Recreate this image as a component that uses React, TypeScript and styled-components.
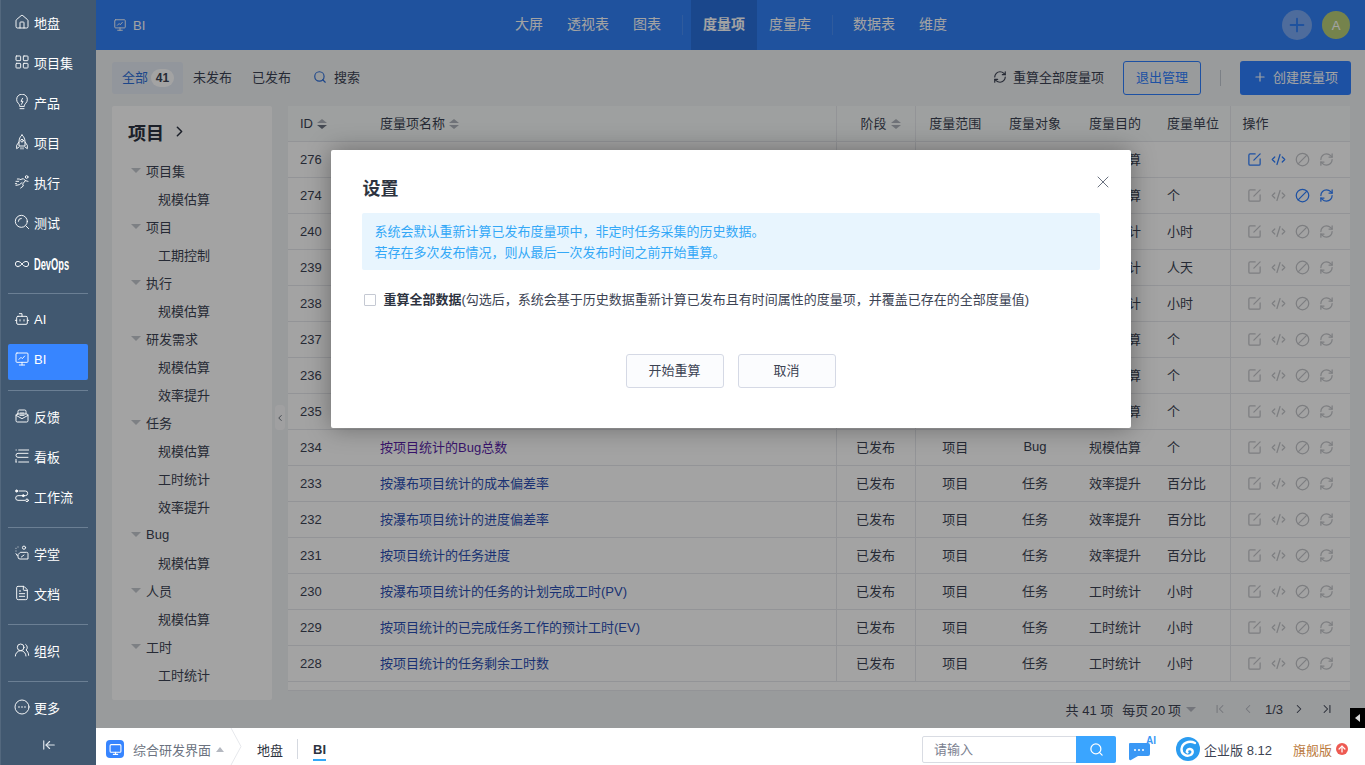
import React from 'react';
import styled, { createGlobalStyle } from 'styled-components';
import {
  House,
  LayoutGrid,
  Infinity as InfinityIcon,
  Bot,
  FileText,
  UsersRound,
  ArrowLeftToLine,
  ChevronRight,
  ChevronLeft,
  ChevronFirst,
  ChevronLast,
  Search,
  RefreshCw,
  Plus,
  X,
  CodeXml,
  Monitor,
  ArrowUp,
} from 'lucide-react';

const GlobalStyle = createGlobalStyle`
  html, body {
    margin: 0;
    padding: 0;
    height: 100%;
    overflow: hidden;
    font-family: "Liberation Sans", "Noto Sans CJK SC", sans-serif;
    font-size: 13px;
    color: #3c4353;
  }
  * { box-sizing: border-box; }
`;

const Shell = styled.div`
  display: flex;
  width: 1365px;
  height: 765px;
`;

const Side = styled.aside`
  width: 96px;
  flex: none;
  display: flex;
  flex-direction: column;
  background: #415870;
  border-left: 1px solid #53687e;
`;

const SideGroup = styled.div<{ $top?: number; $bottom?: number; $last?: boolean }>`
  margin: 0 8px 0 7px;
  padding: ${(p) => p.$top ?? 10}px 0 ${(p) => p.$bottom ?? 10}px;
  display: flex;
  flex-direction: column;
  gap: 4px;
  border-bottom: ${(p) => (p.$last ? 'none' : '1px solid #6b7f94')};
`;

const SideItem = styled.div<{ $active?: boolean; $extra?: number }>`
  height: 36px;
  margin-top: ${(p) => p.$extra ?? 0}px;
  padding: 0 0 6px 6px;
  display: flex;
  align-items: center;
  gap: 4px;
  color: #fff;
  font-size: 13px;
  font-weight: 400;
  border-radius: 2px;
  background: ${(p) => (p.$active ? '#3785ff' : 'transparent')};
  svg {
    width: 16px;
    height: 16px;
    flex: none;
    stroke-width: 1.4;
  }
`;

const DevOpsLabel = styled.span`
  display: inline-block;
  margin-top: 2px;
  font-weight: 700;
  font-size: 16px;
  transform: scaleX(0.58);
  transform-origin: left center;
`;

const Collapse = styled.div`
  margin-top: auto;
  height: 37px;
  padding-bottom: 3px;
  display: flex;
  align-items: center;
  justify-content: center;
  color: #dfe5ec;
  svg {
    width: 14px;
    height: 14px;
  }
`;

const Main = styled.div`
  flex: 1;
  min-width: 0;
  display: flex;
  flex-direction: column;
`;

const Stage = styled.div`
  position: relative;
  height: 728px;
  display: flex;
  flex-direction: column;
  background: #f0f2f5;
`;

const TopBar = styled.header`
  height: 50px;
  flex: none;
  display: flex;
  align-items: stretch;
  background: #3180f7;
  color: #fff;
`;

const TopSide = styled.div<{ $right?: boolean }>`
  flex: 1;
  display: flex;
  align-items: center;
  justify-content: ${(p) => (p.$right ? 'flex-end' : 'flex-start')};
  padding: ${(p) => (p.$right ? '0 15px 0 0' : '0 0 0 17px')};
  gap: ${(p) => (p.$right ? '10px' : '6px')};
  font-size: 13px;
`;

const Nav = styled.nav`
  display: flex;
  align-items: stretch;
  margin-left: -1px;
`;

const NavItem = styled.div<{ $active?: boolean }>`
  padding: 0 12px 4px;
  display: flex;
  align-items: center;
  font-size: 14px;
  font-weight: ${(p) => (p.$active ? 700 : 400)};
  background: ${(p) => (p.$active ? '#2a70dc' : 'transparent')};
`;

const NavDivider = styled.div`
  width: 1px;
  height: 20px;
  align-self: center;
  margin: 0 8px 0 9px;
  background: #4a8ff6;
`;

const AddCircle = styled.div`
  width: 30px;
  height: 30px;
  border-radius: 50%;
  background: #7aa9f5;
  color: #3180f7;
  display: flex;
  align-items: center;
  justify-content: center;
`;

const Avatar = styled.div`
  width: 28px;
  height: 28px;
  border-radius: 50%;
  background: #b8ce78;
  color: #fff;
  font-size: 13px;
  display: flex;
  align-items: center;
  justify-content: center;
`;

const SubBar = styled.div`
  height: 56px;
  flex: none;
  display: flex;
  align-items: center;
  padding: 0 14px 0 16px;
`;

const Tab = styled.div<{ $active?: boolean }>`
  height: 32px;
  padding: 0 ${(p) => (p.$active ? 9 : 10)}px 3px 10px;
  display: flex;
  align-items: center;
  gap: 3px;
  border-radius: 3px;
  color: ${(p) => (p.$active ? '#2e6fd8' : '#3c4353')};
  background: ${(p) => (p.$active ? '#e4ebf5' : 'transparent')};
`;

const Badge = styled.span`
  min-width: 23px;
  height: 18px;
  margin-top: 2px;
  padding: 0 4px;
  border-radius: 9px;
  background: #fff;
  color: #3c4353;
  font-size: 12px;
  font-weight: 700;
  text-align: center;
  line-height: 18px;
`;

const SearchTab = styled.div`
  margin-left: 12px;
  padding-bottom: 3px;
  display: flex;
  align-items: center;
  gap: 7px;
  svg {
    color: #2e6fd8;
    width: 14px;
    height: 14px;
  }
`;

const SubRight = styled.div`
  margin-left: auto;
  display: flex;
  align-items: center;
`;

const Recalc = styled.div`
  display: flex;
  align-items: center;
  gap: 6px;
  margin-right: 19px;
  padding-bottom: 3px;
  svg {
    width: 14px;
    height: 14px;
  }
`;

const OutlineButton = styled.div`
  width: 78px;
  height: 34px;
  padding-bottom: 3px;
  border: 1px solid #2e7fff;
  border-radius: 3px;
  color: #2e7fff;
  display: flex;
  align-items: center;
  justify-content: center;
`;

const SubDivider = styled.div`
  width: 1px;
  height: 16px;
  margin: 0 19px;
  background: #c3c8d0;
`;

const PrimaryButton = styled.div`
  width: 111px;
  height: 34px;
  padding-bottom: 3px;
  border-radius: 3px;
  background: #2e7fff;
  color: #fff;
  display: flex;
  align-items: center;
  justify-content: center;
  gap: 6px;
  svg {
    width: 14px;
    height: 14px;
  }
`;

const Body = styled.div`
  flex: 1;
  min-height: 0;
  display: flex;
  padding: 0 15px 0 16px;
  gap: 16px;
  position: relative;
`;

const TreePanel = styled.div`
  width: 160px;
  height: 594px;
  flex: none;
  background: #fff;
  border-radius: 2px;
`;

const TreeTitle = styled.div`
  height: 51px;
  padding: 0 0 0 16px;
  display: flex;
  align-items: center;
  gap: 7px;
  font-size: 18px;
  font-weight: 700;
  color: #2d3340;
  svg {
    width: 17px;
    height: 17px;
    stroke-width: 2.2;
  }
`;

const TreeList = styled.div`
  display: flex;
  flex-direction: column;
`;

const TreeRow = styled.div<{ $child?: boolean }>`
  height: 28px;
  display: flex;
  align-items: center;
  gap: 5px;
  padding: 0 0 2px ${(p) => (p.$child ? 46 : 19)}px;
  color: #3c4353;
`;

const Caret = styled.i`
  width: 0;
  height: 0;
  border-left: 5px solid transparent;
  border-right: 5px solid transparent;
  border-top: 5px solid #c4c8cf;
`;

const Handle = styled.div`
  position: absolute;
  left: 179px;
  top: 299px;
  width: 10px;
  height: 25px;
  border-radius: 4px;
  background: #fbfbfc;
  display: flex;
  align-items: center;
  justify-content: center;
  color: #4b5563;
`;

const TableWrap = styled.div`
  flex: 1;
  min-width: 0;
  display: flex;
  flex-direction: column;
`;

const TableBox = styled.div`
  height: 585px;
  background: #fff;
  border-bottom: 1px solid #e6e8ec;
  overflow: hidden;
`;

const Grid = styled.table`
  width: 100%;
  border-collapse: collapse;
  table-layout: fixed;
`;

const Th = styled.th<{ $center?: boolean; $line?: boolean; $lead?: number }>`
  height: 35px;
  padding: 0 12px 2px ${(p) => p.$lead ?? 12}px;
  font-weight: 400;
  font-size: 13px;
  color: #3c4353;
  background: #f8fbfa;
  text-align: ${(p) => (p.$center ? 'center' : 'left')};
  border-bottom: 1px solid #e6e8ec;
  border-left: ${(p) => (p.$line ? '1px solid #e6e8ec' : 'none')};
  white-space: nowrap;
  &:first-child {
    padding-bottom: 0;
  }
`;

const Td = styled.td<{ $center?: boolean; $line?: boolean; $right?: boolean }>`
  height: 36px;
  padding: 0 ${(p) => (p.$right ? 14 : 12)}px 2px 12px;
  color: #3c4353;
  text-align: ${(p) => (p.$right ? 'right' : p.$center ? 'center' : 'left')};
  border-bottom: 1px solid #e6e8ec;
  border-left: ${(p) => (p.$line ? '1px solid #e6e8ec' : 'none')};
  white-space: nowrap;
  &:first-child {
    padding-bottom: 0;
  }
`;

const NameLink = styled.a<{ $visited?: boolean }>`
  color: ${(p) => (p.$visited ? '#5a1fa8' : '#2b4fb4')};
  text-decoration: none;
`;

const SortMark = styled.span<{ $down?: boolean }>`
  display: inline-flex;
  flex-direction: column;
  gap: 2px;
  margin-left: 4px;
  vertical-align: middle;
  &::before,
  &::after {
    content: '';
    width: 0;
    height: 0;
    border-left: 5px solid transparent;
    border-right: 5px solid transparent;
  }
  &::before {
    border-bottom: 4px solid #aeb3bc;
  }
  &::after {
    border-top: 4px solid ${(p) => (p.$down ? '#6b7280' : '#aeb3bc')};
  }
`;

const Ops = styled.div`
  display: flex;
  align-items: center;
  gap: 8px;
  padding: 2px 0 0 4px;
`;

const OpIcon = styled.span<{ $on?: boolean }>`
  width: 16px;
  height: 16px;
  display: inline-flex;
  align-items: center;
  justify-content: center;
  color: ${(p) => (p.$on ? '#2e7fff' : '#c4c6ca')};
  svg {
    width: 15px;
    height: 15px;
    stroke-width: 2;
  }
`;

const Pager = styled.div`
  flex: 1;
  display: flex;
  align-items: center;
  justify-content: flex-end;
  padding: 0 16px 1px 0;
  color: #3c4353;
`;

const PageSize = styled.span`
  margin-left: 9px;
  word-spacing: -1px;
`;

const PagerCaret = styled.i`
  width: 0;
  height: 0;
  margin: 0 17px 0 5px;
  border-left: 5px solid transparent;
  border-right: 5px solid transparent;
  border-top: 5px solid #b4b8c0;
`;

const PagerBtn = styled.span<{ $off?: boolean; $gap?: number; $lead?: number }>`
  display: inline-flex;
  margin-left: ${(p) => p.$lead ?? 0}px;
  margin-right: ${(p) => p.$gap ?? 0}px;
  color: ${(p) => (p.$off ? '#b6bac1' : '#3c4353')};
  svg {
    width: 14px;
    height: 14px;
    stroke-width: 1.8;
  }
`;

const Dim = styled.div`
  position: absolute;
  inset: 0;
  background: rgba(0, 0, 0, 0.36);
  padding-top: 150px;
  display: flex;
  justify-content: center;
`;

const Modal = styled.div`
  position: relative;
  width: 800px;
  height: 278px;
  padding: 26px 31px 0 31px;
  background: #fff;
  border-radius: 2px;
  box-shadow: 0 0 24px rgba(0, 0, 0, 0.35);
`;

const ModalTitle = styled.div`
  font-size: 18px;
  font-weight: 700;
  line-height: 26px;
  color: #2d3340;
  margin: 0 0 11px 1px;
`;

const CloseBtn = styled.div`
  position: absolute;
  top: 22px;
  right: 18px;
  color: #6b7280;
  display: flex;
  svg {
    width: 20px;
    height: 20px;
    stroke-width: 1.2;
  }
`;

const Notice = styled.div`
  height: 57px;
  padding: 8px 13px;
  border-radius: 2px;
  background: #e8f5fe;
  color: #33a8f7;
  line-height: 21px;
`;

const CheckRow = styled.div`
  display: flex;
  align-items: center;
  gap: 8px;
  margin: 23px 0 0 2px;
  height: 14px;
  color: #3c4353;
  b {
    font-weight: 700;
    color: #2d3340;
  }
`;

const CheckBox = styled.span`
  width: 12px;
  height: 12px;
  flex: none;
  border: 1px solid #c5c9d3;
  border-radius: 1px;
`;

const CheckText = styled.span`
  margin-top: -3px;
`;

const ModalActions = styled.div`
  margin-top: 47px;
  display: flex;
  justify-content: center;
  gap: 14px;
`;

const ModalBtn = styled.div`
  width: 98px;
  height: 34px;
  padding-bottom: 3px;
  border: 1px solid #d5d9e5;
  border-radius: 3px;
  background: #fbfcfe;
  color: #3c4353;
  display: flex;
  align-items: center;
  justify-content: center;
`;

const SideTab = styled.div`
  position: absolute;
  right: 0;
  bottom: 0;
  width: 15px;
  height: 20px;
  background: #000;
  display: flex;
  align-items: center;
  justify-content: center;
  &::before {
    content: '';
    border-top: 4px solid transparent;
    border-bottom: 4px solid transparent;
    border-right: 5px solid #d8d8d8;
  }
`;

const Footer = styled.footer`
  height: 37px;
  flex: none;
  background: #fff;
  display: flex;
  align-items: center;
  padding: 5px 17px 0 10px;
`;

const AppBadge = styled.div`
  width: 18px;
  height: 18px;
  border-radius: 4px;
  background: #3785ff;
  color: #fff;
  display: flex;
  align-items: center;
  justify-content: center;
  svg {
    width: 13px;
    height: 13px;
  }
`;

const AppName = styled.div`
  margin-left: 9px;
  color: #6b7280;
`;

const AppCaret = styled.i`
  width: 0;
  height: 0;
  margin-left: 5px;
  border-left: 4px solid transparent;
  border-right: 4px solid transparent;
  border-bottom: 5px solid #b4b8c0;
`;

const Crumb = styled.svg`
  width: 12px;
  height: 37px;
  margin: -5px 0 0 6px;
  flex: none;
`;

const FootTab = styled.div<{ $active?: boolean; $lead?: number }>`
  position: relative;
  height: 32px;
  margin-left: ${(p) => p.$lead ?? 0}px;
  display: flex;
  align-items: center;
  color: #2d3340;
  font-weight: ${(p) => (p.$active ? 700 : 400)};
  &::after {
    content: '';
    display: ${(p) => (p.$active ? 'block' : 'none')};
    position: absolute;
    left: 0;
    right: 0;
    bottom: 4px;
    height: 2px;
    background: #33a8f7;
  }
`;

const FootDivider = styled.div`
  width: 1px;
  height: 20px;
  margin: 0 15px 0 14px;
  background: #d5d9e0;
`;

const SearchBox = styled.div`
  margin-left: auto;
  width: 194px;
  height: 27px;
  display: flex;
  border: 1px solid #d9dce3;
  border-radius: 2px;
`;

const SearchInput = styled.div`
  flex: 1;
  padding-left: 11px;
  line-height: 25px;
  color: #7b8190;
`;

const SearchBtn = styled.div`
  width: 40px;
  margin: -1px -1px -1px 0;
  background: #3aa5ff;
  border-radius: 0 2px 2px 0;
  color: #fff;
  display: flex;
  align-items: center;
  justify-content: center;
  svg {
    width: 15px;
    height: 15px;
  }
`;

const ChatIcon = styled.svg`
  width: 30px;
  height: 26px;
  margin-left: 11px;
  flex: none;
`;

const Logo = styled.svg`
  width: 24px;
  height: 24px;
  margin-left: 19px;
  flex: none;
`;

const Edition = styled.div`
  margin-left: 4px;
  color: #3c4353;
`;

const Flagship = styled.div`
  margin-left: 21px;
  display: flex;
  align-items: center;
  gap: 4px;
  color: #bb7a3e;
`;

const UpDot = styled.span`
  width: 12px;
  height: 12px;
  border-radius: 50%;
  background: #ee5a52;
  color: #fff;
  display: flex;
  align-items: center;
  justify-content: center;
  svg {
    width: 10px;
    height: 10px;
    stroke-width: 3;
  }
`;

// icons lucide has no close match for
const BulbBolt = () => (
  <svg viewBox="0 0 24 24" fill="none" stroke="currentColor" strokeLinecap="round" strokeLinejoin="round">
    <path d="M8.5 18c0-2-1-3-2.3-4.3A8 8 0 1 1 17.8 13.7C16.5 15 15.5 16 15.5 18z" />
    <path d="M9 22h6" />
    <path d="M12.8 6.5 10.5 11h3l-2.3 4.5" />
  </svg>
);

const UprightRocket = () => (
  <svg viewBox="0 0 24 24" fill="none" stroke="currentColor" strokeLinecap="round" strokeLinejoin="round">
    <path d="M12 1.5c3 2.5 4.5 6 4.5 10.5v6h-9v-6C7.5 7.5 9 4 12 1.5z" />
    <circle cx="12" cy="10" r="2" />
    <path d="M7.5 12 4 17v5l3.5-2.5M16.5 12 20 17v5l-3.5-2.5" />
    <path d="M10.5 20.5v2M13.5 20.5v2" />
  </svg>
);

const Runner = () => (
  <svg viewBox="0 0 24 24" fill="none" stroke="currentColor" strokeLinecap="round" strokeLinejoin="round">
    <circle cx="19" cy="4.5" r="2" />
    <path d="M9 8.5l5-1.5 3 3-4 5 1 3-4 3" />
    <path d="M17 10l4 1M12 13l-4 3-5 1" />
    <path d="M3 11h4M5 7.5h3M2 14.5h2" />
  </svg>
);

const ScopeSearch = () => (
  <svg viewBox="0 0 24 24" fill="none" stroke="currentColor" strokeLinecap="round" strokeLinejoin="round">
    <circle cx="11" cy="11" r="9" />
    <path d="M18 18l4 4" />
    <path d="M6.5 11a4.5 4.5 0 0 1 4.5-4.5" />
  </svg>
);

const BoardChart = ({ size }: { size?: number }) => (
  <svg width={size} height={size} viewBox="0 0 24 24" fill="none" stroke="currentColor" strokeWidth="1.6" strokeLinecap="round" strokeLinejoin="round">
    <rect x="3" y="3" width="18" height="14" rx="1.5" />
    <path d="M8 21h8M12 17v4" />
    <path d="M7.5 12.5l3-3 2 2 3.5-4" />
  </svg>
);

const Inbox = () => (
  <svg viewBox="0 0 24 24" fill="none" stroke="currentColor" strokeLinecap="round" strokeLinejoin="round">
    <path d="M6 9V5a2 2 0 0 1 2-2h8a2 2 0 0 1 2 2v4" />
    <path d="M3 11l9 5 9-5" />
    <rect x="3" y="9" width="18" height="12" rx="2" />
    <path d="M9 7.5h6M9 11h6" />
  </svg>
);

const BoardIcon = () => (
  <svg viewBox="0 0 24 24" fill="none" stroke="currentColor" strokeLinecap="round" strokeLinejoin="round">
    <path d="M7 3h15M7 21h15" />
    <path d="M21 8H6a3 3 0 0 0-3 3v0a3 3 0 0 0 3 3h15" />
    <path d="M3 3h.5M3 21h.5M3 17v4" />
  </svg>
);

const FlowIcon = () => (
  <svg viewBox="0 0 24 24" fill="none" stroke="currentColor" strokeLinecap="round" strokeLinejoin="round">
    <circle cx="4" cy="4.5" r="1.6" fill="currentColor" />
    <path d="M8 4.5h9a3.5 3.5 0 0 1 0 7H6a3.5 3.5 0 0 0 0 7h10" />
    <circle cx="14" cy="11.5" r="1.5" fill="currentColor" />
    <circle cx="19.5" cy="18.5" r="2" />
  </svg>
);

const SchoolIcon = () => (
  <svg viewBox="0 0 24 24" fill="none" stroke="currentColor" strokeLinecap="round" strokeLinejoin="round">
    <circle cx="15" cy="4" r="2.4" />
    <path d="M10 11h9a2 2 0 0 1 2 2v8H9a3 3 0 0 1-3-3v-3z" />
    <path d="M15 15l-4 3" />
    <path d="M3 5v0M3 9v0M6 3v0M3 13l2 3" />
  </svg>
);

const MoreDots = () => (
  <svg viewBox="0 0 24 24" fill="none" stroke="currentColor" strokeLinecap="round">
    <circle cx="12" cy="12" r="10.5" />
    <path d="M7.5 12h.01M12 12h.01M16.5 12h.01" strokeWidth="2.4" />
  </svg>
);

const EditMark = () => (
  <svg viewBox="0 0 24 24" fill="none" stroke="currentColor" strokeLinecap="round" strokeLinejoin="round">
    <path d="M13 3H5a2 2 0 0 0-2 2v14a2 2 0 0 0 2 2h14a2 2 0 0 0 2-2v-8" />
    <path d="M21 3 11 13" />
  </svg>
);

const BanMark = () => (
  <svg viewBox="0 0 24 24" fill="none" stroke="currentColor" strokeLinecap="round">
    <circle cx="12" cy="12" r="10" />
    <path d="M19 5 5 19" />
  </svg>
);

const tree: [string, string[]][] = [
  ['项目集', ['规模估算']],
  ['项目', ['工期控制']],
  ['执行', ['规模估算']],
  ['研发需求', ['规模估算', '效率提升']],
  ['任务', ['规模估算', '工时统计', '效率提升']],
  ['Bug', ['规模估算']],
  ['人员', ['规模估算']],
  ['工时', ['工时统计']],
];

type Row = {
  id: number;
  name?: string;
  target?: string;
  purpose: string;
  unit: string;
  visited?: boolean;
};

// the first eight rows sit behind the dialog: only the id, the last glyph of
// the purpose and the unit show, so the hidden cells stay empty
const rows: Row[] = [
  { id: 276, purpose: '算', unit: '' },
  { id: 274, purpose: '算', unit: '个' },
  { id: 240, purpose: '计', unit: '小时' },
  { id: 239, purpose: '计', unit: '人天' },
  { id: 238, purpose: '计', unit: '小时' },
  { id: 237, purpose: '算', unit: '个' },
  { id: 236, purpose: '算', unit: '个' },
  { id: 235, purpose: '算', unit: '个' },
  { id: 234, name: '按项目统计的Bug总数', target: 'Bug', purpose: '规模估算', unit: '个', visited: true },
  { id: 233, name: '按瀑布项目统计的成本偏差率', target: '任务', purpose: '效率提升', unit: '百分比' },
  { id: 232, name: '按瀑布项目统计的进度偏差率', target: '任务', purpose: '效率提升', unit: '百分比' },
  { id: 231, name: '按项目统计的任务进度', target: '任务', purpose: '效率提升', unit: '百分比' },
  { id: 230, name: '按瀑布项目统计的任务的计划完成工时(PV)', target: '任务', purpose: '工时统计', unit: '小时' },
  { id: 229, name: '按项目统计的已完成任务工作的预计工时(EV)', target: '任务', purpose: '工时统计', unit: '小时' },
  { id: 228, name: '按项目统计的任务剩余工时数', target: '任务', purpose: '工时统计', unit: '小时' },
];

export default function App() {
  return (
    <Shell>
      <GlobalStyle />
      <Side>
        <SideGroup $top={7} $bottom={8}>
          <SideItem><House />地盘</SideItem>
          <SideItem><LayoutGrid />项目集</SideItem>
          <SideItem><BulbBolt />产品</SideItem>
          <SideItem><UprightRocket />项目</SideItem>
          <SideItem><Runner />执行</SideItem>
          <SideItem><ScopeSearch />测试</SideItem>
          <SideItem $extra={2}><InfinityIcon /><DevOpsLabel>DevOps</DevOpsLabel></SideItem>
        </SideGroup>
        <SideGroup>
          <SideItem><Bot />AI</SideItem>
          <SideItem $active><BoardChart />BI</SideItem>
        </SideGroup>
        <SideGroup>
          <SideItem><Inbox />反馈</SideItem>
          <SideItem><BoardIcon />看板</SideItem>
          <SideItem><FlowIcon />工作流</SideItem>
        </SideGroup>
        <SideGroup>
          <SideItem><SchoolIcon />学堂</SideItem>
          <SideItem><FileText />文档</SideItem>
        </SideGroup>
        <SideGroup>
          <SideItem><UsersRound />组织</SideItem>
        </SideGroup>
        <SideGroup $last $bottom={0}>
          <SideItem><MoreDots />更多</SideItem>
        </SideGroup>
        <Collapse><ArrowLeftToLine /></Collapse>
      </Side>

      <Main>
        <Stage>
          <TopBar>
            <TopSide><BoardChart size={14} />BI</TopSide>
            <Nav>
              <NavItem>大屏</NavItem>
              <NavItem>透视表</NavItem>
              <NavItem>图表</NavItem>
              <NavDivider />
              <NavItem $active>度量项</NavItem>
              <NavItem>度量库</NavItem>
              <NavDivider />
              <NavItem>数据表</NavItem>
              <NavItem>维度</NavItem>
            </Nav>
            <TopSide $right>
              <AddCircle><Plus size={22} strokeWidth={2} /></AddCircle>
              <Avatar>A</Avatar>
            </TopSide>
          </TopBar>

          <SubBar>
            <Tab $active>全部<Badge>41</Badge></Tab>
            <Tab>未发布</Tab>
            <Tab>已发布</Tab>
            <SearchTab><Search />搜索</SearchTab>
            <SubRight>
              <Recalc><RefreshCw />重算全部度量项</Recalc>
              <OutlineButton>退出管理</OutlineButton>
              <SubDivider />
              <PrimaryButton><Plus />创建度量项</PrimaryButton>
            </SubRight>
          </SubBar>

          <Body>
            <TreePanel>
              <TreeTitle>项目<ChevronRight /></TreeTitle>
              <TreeList>
                {tree.map(([group, children]) => (
                  <React.Fragment key={group}>
                    <TreeRow><Caret />{group}</TreeRow>
                    {children.map((c) => (
                      <TreeRow $child key={group + c}>{c}</TreeRow>
                    ))}
                  </React.Fragment>
                ))}
              </TreeList>
            </TreePanel>
            <Handle><ChevronLeft size={14} /></Handle>

            <TableWrap>
              <TableBox>
                <Grid>
                  <colgroup>
                    <col style={{ width: 80 }} />
                    <col />
                    <col style={{ width: 79 }} />
                    <col style={{ width: 80 }} />
                    <col style={{ width: 80 }} />
                    <col style={{ width: 80 }} />
                    <col style={{ width: 75 }} />
                    <col style={{ width: 120 }} />
                  </colgroup>
                  <thead>
                    <tr>
                      <Th>ID<SortMark $down /></Th>
                      <Th>度量项名称<SortMark /></Th>
                      <Th $center $line $lead={22}>阶段<SortMark /></Th>
                      <Th $center $line>度量范围</Th>
                      <Th $center>度量对象</Th>
                      <Th $center>度量目的</Th>
                      <Th>度量单位</Th>
                      <Th $line>操作</Th>
                    </tr>
                  </thead>
                  <tbody>
                    {rows.map((r, i) => (
                      <tr key={r.id}>
                        <Td>{r.id}</Td>
                        <Td>{r.name && <NameLink $visited={r.visited}>{r.name}</NameLink>}</Td>
                        <Td $center $line>{r.name && '已发布'}</Td>
                        <Td $center $line>{r.name && '项目'}</Td>
                        <Td $center>{r.target}</Td>
                        <Td $center $right={!r.name}>{r.purpose}</Td>
                        <Td>{r.unit}</Td>
                        <Td $line>
                          <Ops>
                            <OpIcon $on={i === 0}><EditMark /></OpIcon>
                            <OpIcon $on={i === 0}><CodeXml /></OpIcon>
                            <OpIcon $on={i === 1}><BanMark /></OpIcon>
                            <OpIcon $on={i === 1}><RefreshCw /></OpIcon>
                          </Ops>
                        </Td>
                      </tr>
                    ))}
                  </tbody>
                </Grid>
              </TableBox>
              <Pager>
                共 41 项
                <PageSize>每页 20 项</PageSize>
                <PagerCaret />
                <PagerBtn $off $gap={14}><ChevronFirst /></PagerBtn>
                <PagerBtn $off $gap={10}><ChevronLeft /></PagerBtn>
                1/3
                <PagerBtn $gap={14} $lead={9}><ChevronRight /></PagerBtn>
                <PagerBtn><ChevronLast /></PagerBtn>
              </Pager>
            </TableWrap>
          </Body>

          <Dim>
            <Modal>
              <CloseBtn><X /></CloseBtn>
              <ModalTitle>设置</ModalTitle>
              <Notice>
                系统会默认重新计算已发布度量项中，非定时任务采集的历史数据。
                <br />
                若存在多次发布情况，则从最后一次发布时间之前开始重算。
              </Notice>
              <CheckRow>
                <CheckBox />
                <CheckText><b>重算全部数据</b>(勾选后，系统会基于历史数据重新计算已发布且有时间属性的度量项，并覆盖已存在的全部度量值)</CheckText>
              </CheckRow>
              <ModalActions>
                <ModalBtn>开始重算</ModalBtn>
                <ModalBtn>取消</ModalBtn>
              </ModalActions>
            </Modal>
          </Dim>
          <SideTab />
        </Stage>

        <Footer>
          <AppBadge><Monitor /></AppBadge>
          <AppName>综合研发界面</AppName>
          <AppCaret />
          <Crumb viewBox="0 0 12 37">
            <path d="M1 0 11 18.5 1 37" fill="none" stroke="#e6e8ec" />
          </Crumb>
          <FootTab $lead={15}>地盘</FootTab>
          <FootDivider />
          <FootTab $active>BI</FootTab>
          <SearchBox>
            <SearchInput>请输入</SearchInput>
            <SearchBtn><Search /></SearchBtn>
          </SearchBox>
          <ChatIcon viewBox="0 0 30 26">
            <path d="M3 7h18a2 2 0 0 1 2 2v9a2 2 0 0 1-2 2H11l-7 4a1.5 1.5 0 0 1-2-1.4V8a1 1 0 0 1 1-1z" fill="#3a98f5" />
            <circle cx="8" cy="14" r="1" fill="#fff" />
            <circle cx="12" cy="14" r="1" fill="#fff" />
            <circle cx="16" cy="14" r="1" fill="#fff" />
            <text x="19" y="8" fontSize="10" fontWeight="700" fill="#3a98f5" fontFamily="Liberation Sans">AI</text>
          </ChatIcon>
          <Logo viewBox="0 0 24 24">
            <circle cx="12" cy="12" r="12" fill="#2b9cf0" />
            <path d="M19 6C13 3 6 6 5.5 12c-.4 5 5 8 9 6 3-1.6 3-5.5-.5-6-2.5-.3-4 2-2.500 3.500" fill="none" stroke="#fff" strokeWidth="2.4" strokeLinecap="round" />
          </Logo>
          <Edition>企业版 8.12</Edition>
          <Flagship>旗舰版<UpDot><ArrowUp /></UpDot></Flagship>
        </Footer>
      </Main>
    </Shell>
  );
}
